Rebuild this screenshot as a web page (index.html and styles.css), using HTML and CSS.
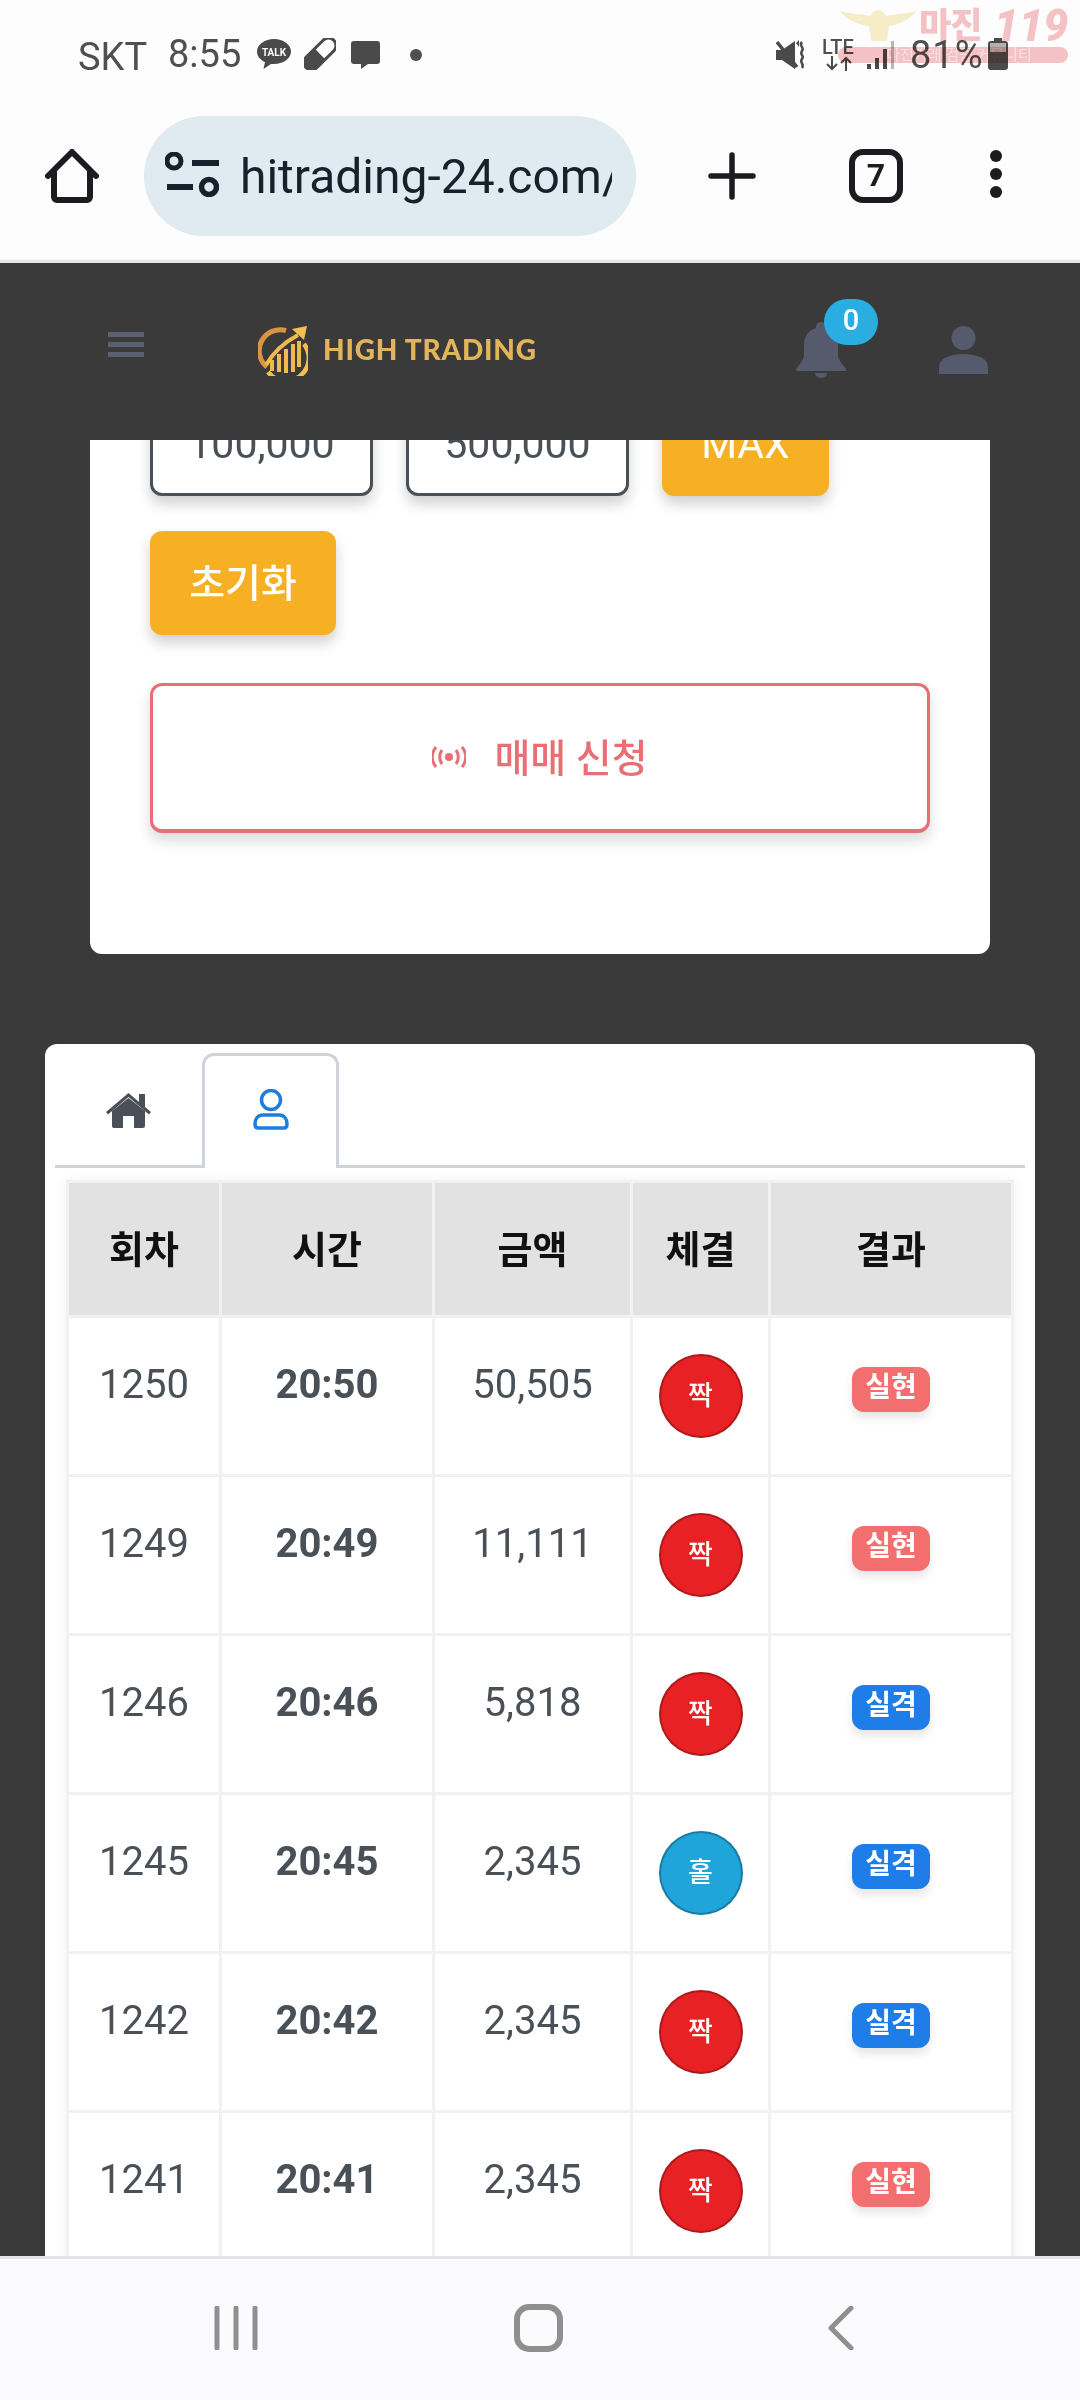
FILE: index.html
```html
<!DOCTYPE html>
<html lang="ko">
<head>
    <meta charset="UTF-8">
    <meta name="viewport" content="width=device-width, initial-scale=1.0">
    <title>High Trading</title>
    <link rel="stylesheet" href="styles.css">
</head>
<body>
    <div class="phone">
        <div class="statusbar">
            <div class="status-left">
                <span class="carrier">SKT</span>
                <span class="clock">8:55</span>
                <svg class="ic-talk" viewBox="0 0 34 32"><path d="M17 1C8 1 0 6.500 0 13.500 0 18.500 3.500 22 8 24l-1.500 7L14 26h3c9 0 17-5.500 17-12.500S26 1 17 1z" fill="#4a4a4a"/><text x="17" y="18" text-anchor="middle" class="talk-text">TALK</text></svg>
                <svg class="ic-pill" viewBox="0 0 32 32"><g transform="rotate(-45 16 16)"><rect x="-5" y="7" width="42" height="18" rx="9" fill="#4a4a4a"/><path d="M16 10h12a6 6 0 0 1 0 12H16z" fill="#fdfdfd"/></g></svg>
                <svg class="ic-chat" viewBox="0 0 29 28"><path d="M3 0h23a3 3 0 0 1 3 3v17a3 3 0 0 1-3 3H17l-7 5v-5H3a3 3 0 0 1-3-3V3a3 3 0 0 1 3-3z" fill="#4a4a4a"/></svg>
                <span class="status-dot"></span>
            </div>
            <div class="status-right">
                <svg class="ic-mute" viewBox="0 0 30 30"><path d="M0 10h6L19 1v28L6 20H0z" fill="#4a4a4a"/><path d="M1 2l20 25" stroke="#4a4a4a" stroke-width="3.500"/><path d="M20 3l3-3v7zM26 2c-4 4 3 5 0 9s3 4 0 8 3 5 0 9" fill="#4a4a4a"/><path d="M26 2c-4 4 3 5 0 9s3 4 0 8 3 5 0 9" fill="none" stroke="#4a4a4a" stroke-width="2.500"/></svg>
                <div class="lte">
                    <span class="lte-text">LTE</span>
                    <svg class="ic-arrows" viewBox="0 0 28 15"><path d="M7 0v13M2 8l5 5 5-5M21 15V2M16 7l5-5 5 5" fill="none" stroke="#4a4a4a" stroke-width="2"/></svg>
                </div>
                <svg class="ic-signal" viewBox="0 0 27 28"><path d="M0 23h4v5H0zM8 17h4v11H8zM16 8h4v20h-4z" fill="#4a4a4a"/><path d="M24 0h3v28h-3z" fill="#b8b8b8"/></svg>
                <span class="battery-pct">81%</span>
                <svg class="ic-battery" viewBox="0 0 20 32"><path d="M6 0h8v3h3a3 3 0 0 1 3 3v23a3 3 0 0 1-3 3H3a3 3 0 0 1-3-3V6a3 3 0 0 1 3-3h3z" fill="#4a4a4a"/><path d="M2 5h16v9H2z" fill="#b5b0ae"/></svg>
            </div>
            <div class="watermark">
                <svg class="wm-eagle" viewBox="0 0 76 32"><path d="M0 1c10 3 22 3 30 5 2-4 5-6 8-6s6 2 8 6c8-2 20-2 30-5-6 9-18 14-27 15l-2 15H31l-2-15C20 15 6 10 0 1z" fill="#f6efc9"/></svg>
                <span class="wm-name">마진</span>
                <span class="wm-num">119</span>
                <div class="wm-band">마진거래 검증 커뮤니티</div>
            </div>
        </div>

        <div class="toolbar">
            <svg class="ic-home" viewBox="0 0 54 54"><path d="M3 27L27 3l24 24M9 23v25a3 3 0 0 0 3 3h30a3 3 0 0 0 3-3V23" fill="none" stroke="#1b1b20" stroke-width="6" stroke-linecap="round" stroke-linejoin="round"/></svg>
            <div class="urlbar">
                <svg class="ic-tune" viewBox="0 0 54 45"><circle cx="9" cy="9" r="7" fill="none" stroke="#17212b" stroke-width="5"/><circle cx="44" cy="35" r="7.500" fill="none" stroke="#17212b" stroke-width="5.500"/><path d="M27 11h27M2 35h26" stroke="#17212b" stroke-width="6"/></svg>
                <span class="url-text">hitrading-24.com/</span>
            </div>
            <svg class="ic-plus" viewBox="0 0 48 48"><path d="M24 3v42M3 24h42" stroke="#1b1b20" stroke-width="5.500" stroke-linecap="round"/></svg>
            <div class="tabcount">7</div>
            <div class="dots"><i></i><i></i><i></i></div>
        </div>

        <header class="site-header">
            <div class="burger"><i></i><i></i><i></i></div>
            <div class="brand">
                <svg class="brand-mark" viewBox="0 0 50 50">
                    <path d="M28 4.500A21 21 0 0 0 9 41" fill="none" stroke="#db9540" stroke-width="5"/>
                    <path d="M10 46A22 22 0 0 0 46 18" fill="none" stroke="#f4bf4f" stroke-width="4.500"/>
                    <path d="M8 39C16 25 27 16 40 9" fill="none" stroke="#f2ba4c" stroke-width="4"/>
                    <path d="M34 3l15-3-3 14z" fill="#f4bf4f"/>
                    <path d="M14 45V34M21 46V28M28 47V23M35 46V18M41 41V15" stroke="#f2ba4c" stroke-width="4"/>
                </svg>
                <span class="brand-name">HIGH TRADING</span>
            </div>
            <div class="bell-wrap">
                <svg class="ic-bell" viewBox="0 0 50 56"><path d="M25 0a5 5 0 0 1 5 5v1c8 2 12 9 12 17v11c0 3 4 8 8 13v2H0v-2c4-5 8-10 8-13V23C8 15 12 8 20 6V5a5 5 0 0 1 5-5zM19 51h12a6 5 0 0 1-12 0z" fill="#555a6c"/></svg>
                <span class="bell-badge">0</span>
            </div>
            <svg class="ic-user" viewBox="0 0 49 48"><circle cx="24.500" cy="12" r="12" fill="#555a6c"/><path d="M0 48V41c0-8 10-13 24.500-13S49 33 49 41v7z" fill="#555a6c"/></svg>
        </header>

        <main class="content">
            <section class="order-card">
                <div class="amount-row">
                    <button class="amount-btn">100,000</button>
                    <button class="amount-btn">500,000</button>
                    <button class="yellow-btn max-btn">MAX</button>
                </div>
                <button class="yellow-btn reset-btn">초기화</button>
                <button class="submit-btn">
                    <svg class="ic-signal-live" viewBox="0 0 34 24"><circle cx="17" cy="12" r="4" fill="#e96f75"/><path d="M10 5c-3 4-3 10 0 14M24 5c3 4 3 10 0 14M4 2C-1 8-1 16 4 22M30 2c5 6 5 14 0 20" fill="none" stroke="#e96f75" stroke-width="3"/></svg>
                    <span>매매 신청</span>
                </button>
            </section>

            <section class="history-card">
                <div class="tabs">
                    <div class="tab">
                        <svg class="ic-tab-home" viewBox="0 0 45 36"><path d="M22.500 6L6 19v15a2 2 0 0 0 2 2h9V24h11v12h9a2 2 0 0 0 2-2V19z" fill="#495057"/><path d="M0 20L22.500 1 33 10V2h6v13l6 5-2 2.500L22.500 5 2 22.500z" fill="#495057"/></svg>
                    </div>
                    <div class="tab active">
                        <svg class="ic-tab-user" viewBox="0 0 36 41"><circle cx="18" cy="11" r="9.500" fill="none" stroke="#1e7de0" stroke-width="3.500"/><path d="M10 26h16c5 0 8 4 8 9 0 3-1 4-3 4H5c-2 0-3-1-3-4 0-5 3-9 8-9z" fill="none" stroke="#1e7de0" stroke-width="3.500"/></svg>
                    </div>
                </div>
                <table class="history">
                    <colgroup>
                        <col class="c1"><col class="c2"><col class="c3"><col class="c4"><col class="c5">
                    </colgroup>
                    <thead>
                        <tr><th>회차</th><th>시간</th><th>금액</th><th>체결</th><th>결과</th></tr>
                    </thead>
                    <tbody>
                        <tr><td>1250</td><td class="time">20:50</td><td>50,505</td><td><span class="ball even">짝</span></td><td><span class="chip win">실현</span></td></tr>
                        <tr><td>1249</td><td class="time">20:49</td><td>11,111</td><td><span class="ball even">짝</span></td><td><span class="chip win">실현</span></td></tr>
                        <tr><td>1246</td><td class="time">20:46</td><td>5,818</td><td><span class="ball even">짝</span></td><td><span class="chip lose">실격</span></td></tr>
                        <tr><td>1245</td><td class="time">20:45</td><td>2,345</td><td><span class="ball odd">홀</span></td><td><span class="chip lose">실격</span></td></tr>
                        <tr><td>1242</td><td class="time">20:42</td><td>2,345</td><td><span class="ball even">짝</span></td><td><span class="chip lose">실격</span></td></tr>
                        <tr><td>1241</td><td class="time">20:41</td><td>2,345</td><td><span class="ball even">짝</span></td><td><span class="chip win">실현</span></td></tr>
                    </tbody>
                </table>
            </section>
        </main>

        <nav class="navbar">
            <svg class="ic-recents" viewBox="0 0 44 44"><path d="M3 2v40M22 2v40M41 2v40" stroke="#8f8f8f" stroke-width="5" stroke-linecap="round"/></svg>
            <div class="nav-home"></div>
            <svg class="ic-back" viewBox="0 0 26 44"><path d="M23 2L3 22l20 20" fill="none" stroke="#8f8f8f" stroke-width="5" stroke-linecap="round" stroke-linejoin="round"/></svg>
        </nav>
    </div>
</body>
</html>
```

FILE: styles.css
```css
* {
    box-sizing: border-box;
}
body {
    margin: 0;
    font-family: Roboto, "Noto Sans CJK KR", sans-serif;
    background-color: #3a3a3a;
}
button {
    font-family: inherit;
    cursor: pointer;
}
svg {
    display: block;
    flex: none;
}
.phone {
    width: 1080px;
    height: 2400px;
    display: flex;
    flex-direction: column;
    overflow: hidden;
}

/* status bar */
.statusbar {
    position: relative;
    height: 108px;
    padding: 38px 72px 0 78px;
    display: flex;
    justify-content: space-between;
    background-color: #fdfdfd;
    color: #4f4f4f;
}
.status-left, .status-right {
    display: flex;
    align-items: flex-start;
}
.carrier {
    font-size: 38px;
    line-height: 38px;
    width: 90px;
}
.clock {
    font-size: 38px;
    line-height: 38px;
    margin-top: -3px;
    width: 89px;
}
.ic-talk { width: 34px; height: 32px; }
.talk-text {
    font-size: 10px;
    font-weight: 700;
    fill: #fdfdfd;
}
.ic-pill { width: 32px; height: 32px; margin-left: 13px; }
.ic-chat { width: 29px; height: 28px; margin: 3px 0 0 15px; }
.status-dot {
    width: 12px;
    height: 12px;
    border-radius: 50%;
    background: #4f4f4f;
    margin: 11px 0 0 30px;
}
.ic-mute { width: 30px; height: 30px; margin-top: 2px; }
.lte {
    width: 32px;
    margin-left: 16px;
}
.lte-text {
    display: block;
    font-size: 20px;
    line-height: 18px;
    font-weight: 500;
}
.ic-arrows { width: 28px; height: 15px; margin: 0 0 0 3px; }
.ic-signal { width: 27px; height: 28px; margin: 3px 0 0 13px; }
.battery-pct {
    font-size: 38px;
    line-height: 38px;
    margin: -2px 0 0 16px;
    width: 78px;
    letter-spacing: 1px;
}
.ic-battery { width: 20px; height: 32px; }
.watermark {
    position: absolute;
    left: 836px;
    top: 10px;
    width: 232px;
    height: 54px;
    mix-blend-mode: multiply;
}
.wm-eagle {
    position: absolute;
    left: 4px;
    top: 0;
    width: 76px;
    height: 32px;
}
.wm-name {
    position: absolute;
    left: 83px;
    top: -2px;
    font-size: 35px;
    line-height: 38px;
    font-weight: 900;
    letter-spacing: -1px;
    color: #f6c3c6;
}
.wm-num {
    position: absolute;
    left: 158px;
    top: -6px;
    font-size: 44px;
    line-height: 44px;
    font-weight: 900;
    font-style: italic;
    color: #f6c3c6;
}
.wm-band {
    position: absolute;
    left: 2px;
    right: 0;
    top: 37px;
    height: 16px;
    padding-left: 12px;
    border-radius: 8px;
    background: #f6c3c6;
    color: #fbe3e4;
    font-size: 15px;
    line-height: 16px;
    text-align: center;
}

/* browser toolbar */
.toolbar {
    height: 155px;
    padding: 8px 0 0 45px;
    display: flex;
    align-items: flex-start;
    background-color: #fdfdfd;
    border-bottom: 3px solid #e6e6ea;
}
.ic-home { width: 54px; height: 54px; margin-top: 33px; }
.urlbar {
    width: 492px;
    height: 120px;
    margin-left: 45px;
    padding: 0 24px 0 21px;
    border-radius: 60px;
    background-color: #dfeaf1;
    display: flex;
    align-items: center;
}
.ic-tune { width: 54px; height: 45px; margin-top: -3px; }
.url-text {
    margin-left: 21px;
    font-size: 48px;
    color: #17212b;
    white-space: nowrap;
    overflow: hidden;
    flex: 1;
}
.ic-plus { width: 48px; height: 48px; margin: 36px 0 0 72px; }
.tabcount {
    width: 54px;
    height: 54px;
    margin: 33px 0 0 93px;
    border: 6px solid #1b1b20;
    border-radius: 14px;
    font-size: 32px;
    font-weight: 700;
    line-height: 41px;
    text-align: center;
    color: #1b1b20;
}
.dots {
    margin: 34px 0 0 87px;
    display: flex;
    flex-direction: column;
    gap: 6px;
}
.dots i {
    display: block;
    width: 12px;
    height: 12px;
    border-radius: 50%;
    background: #1b1b20;
}

/* site header */
.site-header {
    position: relative;
    z-index: 2;
    height: 177px;
    flex: none;
    padding: 59px 92px 0 108px;
    display: flex;
    align-items: flex-start;
    background-color: #3a3a3a;
}
.burger {
    width: 36px;
    margin-top: 10px;
    display: flex;
    flex-direction: column;
    gap: 5px;
}
.burger i {
    display: block;
    height: 5px;
    background: #5a6070;
}
.brand {
    display: flex;
    align-items: center;
    margin-left: 114px;
    width: 539px;
}
.brand-mark { width: 50px; height: 50px; margin-top: 4px; }
.brand-name {
    margin-left: 15px;
    font-family: Lato, sans-serif;
    font-size: 28px;
    font-weight: 900;
    letter-spacing: 0.8px;
    color: #e3b55b;
}
.bell-wrap {
    position: relative;
    width: 50px;
    height: 56px;
}
.ic-bell { width: 50px; height: 56px; }
.bell-badge {
    position: absolute;
    left: 28px;
    top: -23px;
    width: 54px;
    height: 46px;
    border-radius: 23px;
    background: #2aade0;
    color: #fff;
    font-size: 29px;
    font-weight: 500;
    line-height: 42px;
    text-align: center;
}
.ic-user { width: 49px; height: 48px; margin: 4px 0 0 93px; }

/* scrolled page */
.content {
    flex: 1;
    min-height: 0;
    overflow: hidden;
    background-color: #3a3a3a;
}
.order-card {
    margin: -48px 90px 90px;
    padding: 0 60px 121px;
    background: #fff;
    border-radius: 12px;
}
.amount-row {
    display: flex;
    gap: 33px;
}
.amount-btn, .yellow-btn {
    height: 104px;
    font-size: 41px;
    border-radius: 12px;
    padding: 0;
    box-shadow: 0 8px 14px rgba(0,0,0,0.18);
}
.amount-btn {
    width: 223px;
    background: #fff;
    border: 3px solid #495057;
    color: #495057;
}
.yellow-btn {
    background-color: #f7b023;
    border: none;
    color: #fff;
}
.max-btn { width: 167px; }
.reset-btn {
    display: block;
    width: 186px;
    margin-top: 35px;
    padding-bottom: 6px;
    font-size: 39px;
    font-weight: 500;
}
.submit-btn {
    width: 780px;
    height: 150px;
    margin-top: 48px;
    padding: 0 0 6px;
    display: flex;
    align-items: center;
    justify-content: center;
    gap: 28px;
    background: #fff;
    border: 3px solid #e96f75;
    border-bottom-width: 4px;
    border-radius: 12px;
    color: #e96f75;
    font-size: 39px;
    font-weight: 500;
    box-shadow: 0 8px 14px rgba(0,0,0,0.14);
}
.ic-signal-live { width: 34px; height: 24px; margin-top: 4px; }

.history-card {
    margin: 0 45px;
    padding: 9px 10px 0;
    background: #fff;
    border-radius: 12px 12px 0 0;
}
.tabs {
    display: flex;
    height: 115px;
    border-bottom: 3px solid #ced4da;
}
.tab {
    width: 147px;
    display: flex;
    justify-content: center;
    padding-top: 39px;
}
.tab.active {
    width: 137px;
    height: 115px;
    padding-top: 33px;
    background: #fff;
    border: 3px solid #ced4da;
    border-bottom: none;
    border-radius: 12px 12px 0 0;
}
.ic-tab-home { width: 45px; height: 36px; }
.ic-tab-user { width: 36px; height: 41px; }

.history {
    width: 945px;
    margin: 12px 0 0 11px;
    border-collapse: collapse;
    table-layout: fixed;
    box-shadow: 0 0 12px rgba(0,0,0,0.05);
}
.c1 { width: 153px; }
.c2 { width: 213px; }
.c3 { width: 198px; }
.c4 { width: 138px; }
.c5 { width: 243px; }
.history th, .history td {
    border: 3px solid #f0f1f4;
    text-align: center;
    padding: 0;
}
.history th {
    height: 135px;
    background: #e2e2e3;
    font-size: 38px;
    font-weight: 700;
    color: #111;
    padding-bottom: 5px;
}
.history td {
    height: 159px;
    vertical-align: top;
    padding-top: 38px;
    font-size: 40px;
    line-height: 58px;
    color: #495057;
}
.history td.time {
    font-weight: 700;
}
.ball {
    display: flex;
    width: 84px;
    height: 84px;
    margin: -2px auto 0;
    align-items: center;
    justify-content: center;
    border-radius: 50%;
    border: 2px solid rgba(0,0,0,0.25);
    color: #fff;
    font-size: 27px;
    font-weight: 500;
    line-height: 1;
}
.ball.even { background: #e82224; }
.ball.odd { background: #1fa5da; }
.chip {
    display: block;
    width: 78px;
    height: 45px;
    margin: 11px auto 0;
    border-radius: 12px;
    color: #fff;
    font-size: 28px;
    font-weight: 700;
    line-height: 41px;
    box-shadow: 0 6px 10px rgba(0,0,0,0.1);
}
.chip.win { background: #f36f6f; }
.chip.lose { background: #1e7de6; }

/* android nav */
.navbar {
    position: relative;
    z-index: 2;
    height: 144px;
    flex: none;
    padding: 47px 0 0 214px;
    display: flex;
    align-items: flex-start;
    background-color: #fbfbfd;
    border-top: 3px solid #e3e3ec;
}
.ic-recents { width: 44px; height: 44px; }
.nav-home {
    width: 49px;
    height: 48px;
    margin: -2px 0 0 256px;
    border: 6px solid #8f8f8f;
    border-radius: 15px;
}
.ic-back { width: 26px; height: 44px; margin-left: 265px; }
```
